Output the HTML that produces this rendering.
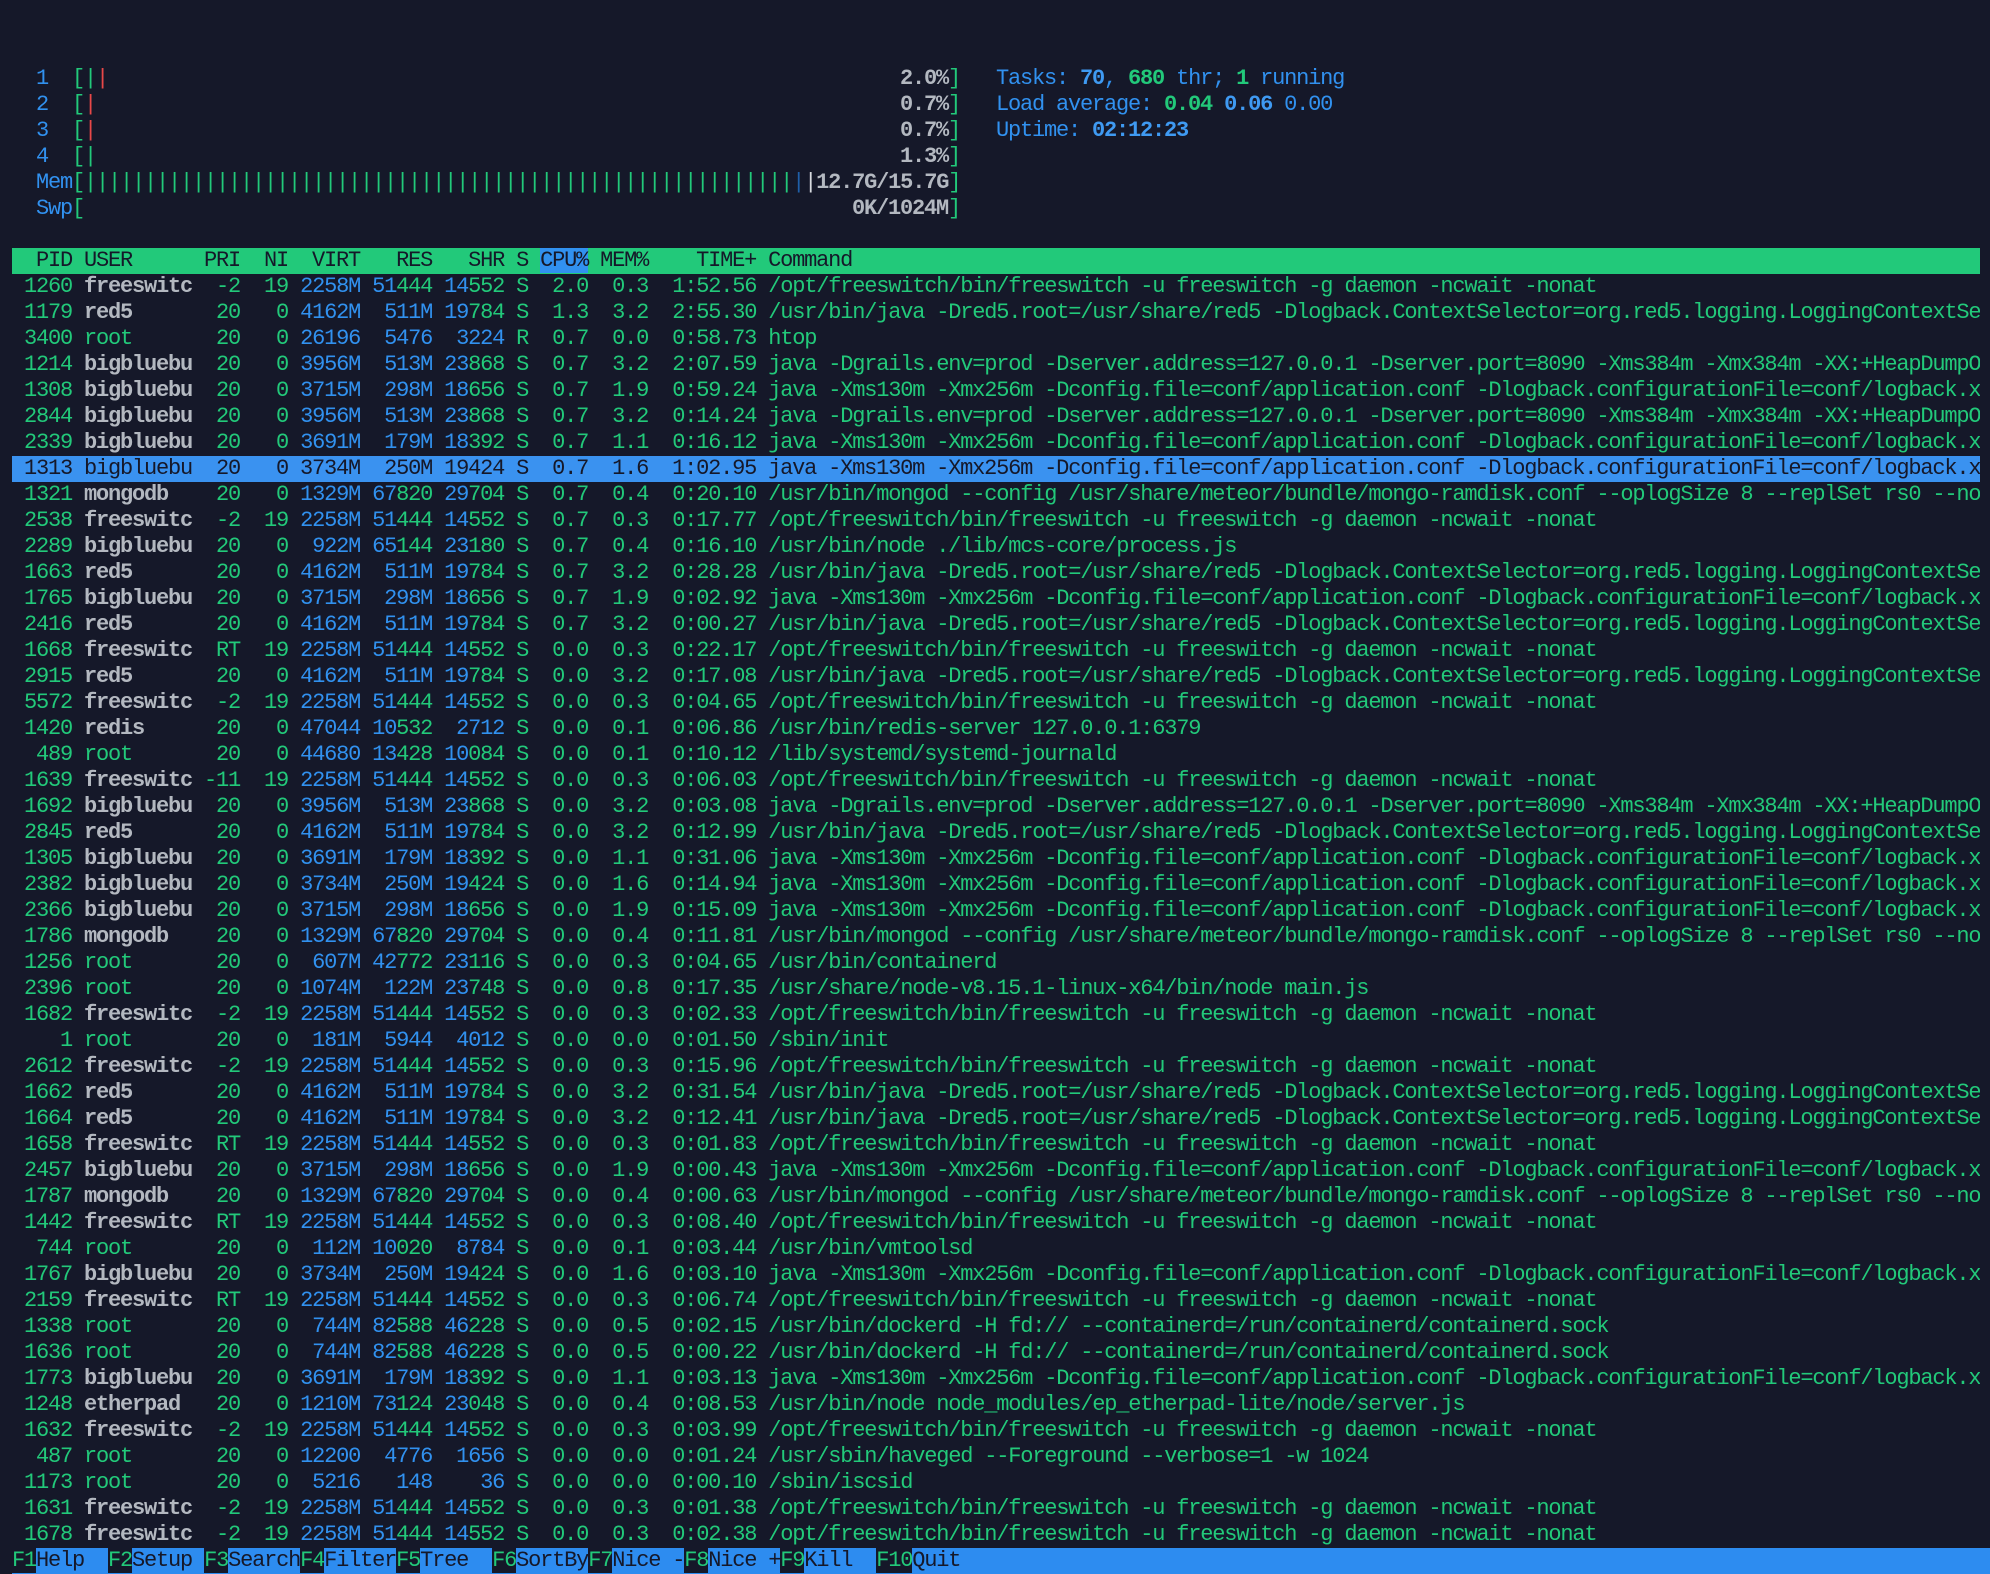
<!DOCTYPE html>
<html><head><meta charset="utf-8">
<style>
html,body{margin:0;padding:0;background:#151829;width:1990px;height:1566px;overflow:hidden}
#t{position:absolute;left:12px;top:66px;width:1978px;font-family:"Liberation Mono",monospace;font-size:22px;letter-spacing:-1.2px;color:#22c97a}
.l{height:26px;line-height:26px;white-space:pre;overflow:hidden;position:relative;width:1968px}
.a{position:absolute;top:0}
i{font-style:normal;color:#3191ef}
em{font-style:normal;font-weight:bold;color:#b3b8c0}
.w{font-weight:bold;color:#b3b8c0}
.r{color:#e84848}
.bb{font-weight:bold;color:#3f9af2}
.bg{font-weight:bold;color:#22c97a}
.wh{color:#d8dbe0}
.dk{color:#1f5fa8}
.hd{background:#22c97a;color:#151829}
.hd span{background:#3191ef}
.sel{background:#3a92f0;color:#151829}
.ft{background:#2d8cf0;color:#151829;width:1978px}
.ft b{font-weight:normal;color:#22c97a;background:#151829}
.val{position:absolute;top:0;left:0;width:948px;text-align:right}
</style></head><body>
<div id="t">
<div class="l"><span class="a" style="left:24px;color:#3191ef">1</span><span class="a" style="left:60px">[|<span class="r">|</span></span><span class="val"><span class="w">2.0%</span>]</span><span class="a" style="left:984px;color:#3191ef">Tasks: <span class="bb">70</span>, <span class="bg">680</span> thr; <span class="bg">1</span> running</span></div>
<div class="l"><span class="a" style="left:24px;color:#3191ef">2</span><span class="a" style="left:60px">[<span class="r">|</span></span><span class="val"><span class="w">0.7%</span>]</span><span class="a" style="left:984px;color:#3191ef">Load average: <span class="bg">0.04</span> <span class="bb">0.06</span> 0.00</span></div>
<div class="l"><span class="a" style="left:24px;color:#3191ef">3</span><span class="a" style="left:60px">[<span class="r">|</span></span><span class="val"><span class="w">0.7%</span>]</span><span class="a" style="left:984px;color:#3191ef">Uptime: <span class="bb">02:12:23</span></span></div>
<div class="l"><span class="a" style="left:24px;color:#3191ef">4</span><span class="a" style="left:60px">[|</span><span class="val"><span class="w">1.3%</span>]</span></div>
<div class="l"><span class="a" style="left:24px;color:#3191ef">Mem</span><span class="a" style="left:60px">[|||||||||||||||||||||||||||||||||||||||||||||||||||||||||||<span class="dk">|</span><span class="wh">|</span><span class="w">12.7G/15.7G</span>]</span></div>
<div class="l"><span class="a" style="left:24px;color:#3191ef">Swp</span><span class="a" style="left:60px">[</span><span class="val"><span class="w">0K/1024M</span>]</span></div>
<div class="l"> </div>
<div class="l hd">  PID USER      PRI  NI  VIRT   RES   SHR S <span>CPU%</span> MEM%    TIME+ Command</div>
<div class="l"> 1260 <em>freeswitc</em>  -2  19 <i>2258M</i> <i>51</i>444 <i>14</i>552 S  2.0  0.3  1:52.56 /opt/freeswitch/bin/freeswitch -u freeswitch -g daemon -ncwait -nonat</div>
<div class="l"> 1179 <em>red5     </em>  20   0 <i>4162M</i>  <i>511M</i> <i>19</i>784 S  1.3  3.2  2:55.30 /usr/bin/java -Dred5.root=/usr/share/red5 -Dlogback.ContextSelector=org.red5.logging.LoggingContextSelector</div>
<div class="l"> 3400 root       20   0 <i>26196</i>  <i>5476</i>  <i>3224</i> R  0.7  0.0  0:58.73 htop</div>
<div class="l"> 1214 <em>bigbluebu</em>  20   0 <i>3956M</i>  <i>513M</i> <i>23</i>868 S  0.7  3.2  2:07.59 java -Dgrails.env=prod -Dserver.address=127.0.0.1 -Dserver.port=8090 -Xms384m -Xmx384m -XX:+HeapDumpOnOutOfMemoryError</div>
<div class="l"> 1308 <em>bigbluebu</em>  20   0 <i>3715M</i>  <i>298M</i> <i>18</i>656 S  0.7  1.9  0:59.24 java -Xms130m -Xmx256m -Dconfig.file=conf/application.conf -Dlogback.configurationFile=conf/logback.xml</div>
<div class="l"> 2844 <em>bigbluebu</em>  20   0 <i>3956M</i>  <i>513M</i> <i>23</i>868 S  0.7  3.2  0:14.24 java -Dgrails.env=prod -Dserver.address=127.0.0.1 -Dserver.port=8090 -Xms384m -Xmx384m -XX:+HeapDumpOnOutOfMemoryError</div>
<div class="l"> 2339 <em>bigbluebu</em>  20   0 <i>3691M</i>  <i>179M</i> <i>18</i>392 S  0.7  1.1  0:16.12 java -Xms130m -Xmx256m -Dconfig.file=conf/application.conf -Dlogback.configurationFile=conf/logback.xml</div>
<div class="l sel"> 1313 bigbluebu  20   0 3734M  250M 19424 S  0.7  1.6  1:02.95 java -Xms130m -Xmx256m -Dconfig.file=conf/application.conf -Dlogback.configurationFile=conf/logback.xml</div>
<div class="l"> 1321 <em>mongodb  </em>  20   0 <i>1329M</i> <i>67</i>820 <i>29</i>704 S  0.7  0.4  0:20.10 /usr/bin/mongod --config /usr/share/meteor/bundle/mongo-ramdisk.conf --oplogSize 8 --replSet rs0 --noauth</div>
<div class="l"> 2538 <em>freeswitc</em>  -2  19 <i>2258M</i> <i>51</i>444 <i>14</i>552 S  0.7  0.3  0:17.77 /opt/freeswitch/bin/freeswitch -u freeswitch -g daemon -ncwait -nonat</div>
<div class="l"> 2289 <em>bigbluebu</em>  20   0  <i>922M</i> <i>65</i>144 <i>23</i>180 S  0.7  0.4  0:16.10 /usr/bin/node ./lib/mcs-core/process.js</div>
<div class="l"> 1663 <em>red5     </em>  20   0 <i>4162M</i>  <i>511M</i> <i>19</i>784 S  0.7  3.2  0:28.28 /usr/bin/java -Dred5.root=/usr/share/red5 -Dlogback.ContextSelector=org.red5.logging.LoggingContextSelector</div>
<div class="l"> 1765 <em>bigbluebu</em>  20   0 <i>3715M</i>  <i>298M</i> <i>18</i>656 S  0.7  1.9  0:02.92 java -Xms130m -Xmx256m -Dconfig.file=conf/application.conf -Dlogback.configurationFile=conf/logback.xml</div>
<div class="l"> 2416 <em>red5     </em>  20   0 <i>4162M</i>  <i>511M</i> <i>19</i>784 S  0.7  3.2  0:00.27 /usr/bin/java -Dred5.root=/usr/share/red5 -Dlogback.ContextSelector=org.red5.logging.LoggingContextSelector</div>
<div class="l"> 1668 <em>freeswitc</em>  RT  19 <i>2258M</i> <i>51</i>444 <i>14</i>552 S  0.0  0.3  0:22.17 /opt/freeswitch/bin/freeswitch -u freeswitch -g daemon -ncwait -nonat</div>
<div class="l"> 2915 <em>red5     </em>  20   0 <i>4162M</i>  <i>511M</i> <i>19</i>784 S  0.0  3.2  0:17.08 /usr/bin/java -Dred5.root=/usr/share/red5 -Dlogback.ContextSelector=org.red5.logging.LoggingContextSelector</div>
<div class="l"> 5572 <em>freeswitc</em>  -2  19 <i>2258M</i> <i>51</i>444 <i>14</i>552 S  0.0  0.3  0:04.65 /opt/freeswitch/bin/freeswitch -u freeswitch -g daemon -ncwait -nonat</div>
<div class="l"> 1420 <em>redis    </em>  20   0 <i>47044</i> <i>10</i>532  <i>2712</i> S  0.0  0.1  0:06.86 /usr/bin/redis-server 127.0.0.1:6379</div>
<div class="l">  489 root       20   0 <i>44680</i> <i>13</i>428 <i>10</i>084 S  0.0  0.1  0:10.12 /lib/systemd/systemd-journald</div>
<div class="l"> 1639 <em>freeswitc</em> -11  19 <i>2258M</i> <i>51</i>444 <i>14</i>552 S  0.0  0.3  0:06.03 /opt/freeswitch/bin/freeswitch -u freeswitch -g daemon -ncwait -nonat</div>
<div class="l"> 1692 <em>bigbluebu</em>  20   0 <i>3956M</i>  <i>513M</i> <i>23</i>868 S  0.0  3.2  0:03.08 java -Dgrails.env=prod -Dserver.address=127.0.0.1 -Dserver.port=8090 -Xms384m -Xmx384m -XX:+HeapDumpOnOutOfMemoryError</div>
<div class="l"> 2845 <em>red5     </em>  20   0 <i>4162M</i>  <i>511M</i> <i>19</i>784 S  0.0  3.2  0:12.99 /usr/bin/java -Dred5.root=/usr/share/red5 -Dlogback.ContextSelector=org.red5.logging.LoggingContextSelector</div>
<div class="l"> 1305 <em>bigbluebu</em>  20   0 <i>3691M</i>  <i>179M</i> <i>18</i>392 S  0.0  1.1  0:31.06 java -Xms130m -Xmx256m -Dconfig.file=conf/application.conf -Dlogback.configurationFile=conf/logback.xml</div>
<div class="l"> 2382 <em>bigbluebu</em>  20   0 <i>3734M</i>  <i>250M</i> <i>19</i>424 S  0.0  1.6  0:14.94 java -Xms130m -Xmx256m -Dconfig.file=conf/application.conf -Dlogback.configurationFile=conf/logback.xml</div>
<div class="l"> 2366 <em>bigbluebu</em>  20   0 <i>3715M</i>  <i>298M</i> <i>18</i>656 S  0.0  1.9  0:15.09 java -Xms130m -Xmx256m -Dconfig.file=conf/application.conf -Dlogback.configurationFile=conf/logback.xml</div>
<div class="l"> 1786 <em>mongodb  </em>  20   0 <i>1329M</i> <i>67</i>820 <i>29</i>704 S  0.0  0.4  0:11.81 /usr/bin/mongod --config /usr/share/meteor/bundle/mongo-ramdisk.conf --oplogSize 8 --replSet rs0 --noauth</div>
<div class="l"> 1256 root       20   0  <i>607M</i> <i>42</i>772 <i>23</i>116 S  0.0  0.3  0:04.65 /usr/bin/containerd</div>
<div class="l"> 2396 root       20   0 <i>1074M</i>  <i>122M</i> <i>23</i>748 S  0.0  0.8  0:17.35 /usr/share/node-v8.15.1-linux-x64/bin/node main.js</div>
<div class="l"> 1682 <em>freeswitc</em>  -2  19 <i>2258M</i> <i>51</i>444 <i>14</i>552 S  0.0  0.3  0:02.33 /opt/freeswitch/bin/freeswitch -u freeswitch -g daemon -ncwait -nonat</div>
<div class="l">    1 root       20   0  <i>181M</i>  <i>5944</i>  <i>4012</i> S  0.0  0.0  0:01.50 /sbin/init</div>
<div class="l"> 2612 <em>freeswitc</em>  -2  19 <i>2258M</i> <i>51</i>444 <i>14</i>552 S  0.0  0.3  0:15.96 /opt/freeswitch/bin/freeswitch -u freeswitch -g daemon -ncwait -nonat</div>
<div class="l"> 1662 <em>red5     </em>  20   0 <i>4162M</i>  <i>511M</i> <i>19</i>784 S  0.0  3.2  0:31.54 /usr/bin/java -Dred5.root=/usr/share/red5 -Dlogback.ContextSelector=org.red5.logging.LoggingContextSelector</div>
<div class="l"> 1664 <em>red5     </em>  20   0 <i>4162M</i>  <i>511M</i> <i>19</i>784 S  0.0  3.2  0:12.41 /usr/bin/java -Dred5.root=/usr/share/red5 -Dlogback.ContextSelector=org.red5.logging.LoggingContextSelector</div>
<div class="l"> 1658 <em>freeswitc</em>  RT  19 <i>2258M</i> <i>51</i>444 <i>14</i>552 S  0.0  0.3  0:01.83 /opt/freeswitch/bin/freeswitch -u freeswitch -g daemon -ncwait -nonat</div>
<div class="l"> 2457 <em>bigbluebu</em>  20   0 <i>3715M</i>  <i>298M</i> <i>18</i>656 S  0.0  1.9  0:00.43 java -Xms130m -Xmx256m -Dconfig.file=conf/application.conf -Dlogback.configurationFile=conf/logback.xml</div>
<div class="l"> 1787 <em>mongodb  </em>  20   0 <i>1329M</i> <i>67</i>820 <i>29</i>704 S  0.0  0.4  0:00.63 /usr/bin/mongod --config /usr/share/meteor/bundle/mongo-ramdisk.conf --oplogSize 8 --replSet rs0 --noauth</div>
<div class="l"> 1442 <em>freeswitc</em>  RT  19 <i>2258M</i> <i>51</i>444 <i>14</i>552 S  0.0  0.3  0:08.40 /opt/freeswitch/bin/freeswitch -u freeswitch -g daemon -ncwait -nonat</div>
<div class="l">  744 root       20   0  <i>112M</i> <i>10</i>020  <i>8784</i> S  0.0  0.1  0:03.44 /usr/bin/vmtoolsd</div>
<div class="l"> 1767 <em>bigbluebu</em>  20   0 <i>3734M</i>  <i>250M</i> <i>19</i>424 S  0.0  1.6  0:03.10 java -Xms130m -Xmx256m -Dconfig.file=conf/application.conf -Dlogback.configurationFile=conf/logback.xml</div>
<div class="l"> 2159 <em>freeswitc</em>  RT  19 <i>2258M</i> <i>51</i>444 <i>14</i>552 S  0.0  0.3  0:06.74 /opt/freeswitch/bin/freeswitch -u freeswitch -g daemon -ncwait -nonat</div>
<div class="l"> 1338 root       20   0  <i>744M</i> <i>82</i>588 <i>46</i>228 S  0.0  0.5  0:02.15 /usr/bin/dockerd -H fd:// --containerd=/run/containerd/containerd.sock</div>
<div class="l"> 1636 root       20   0  <i>744M</i> <i>82</i>588 <i>46</i>228 S  0.0  0.5  0:00.22 /usr/bin/dockerd -H fd:// --containerd=/run/containerd/containerd.sock</div>
<div class="l"> 1773 <em>bigbluebu</em>  20   0 <i>3691M</i>  <i>179M</i> <i>18</i>392 S  0.0  1.1  0:03.13 java -Xms130m -Xmx256m -Dconfig.file=conf/application.conf -Dlogback.configurationFile=conf/logback.xml</div>
<div class="l"> 1248 <em>etherpad </em>  20   0 <i>1210M</i> <i>73</i>124 <i>23</i>048 S  0.0  0.4  0:08.53 /usr/bin/node node_modules/ep_etherpad-lite/node/server.js</div>
<div class="l"> 1632 <em>freeswitc</em>  -2  19 <i>2258M</i> <i>51</i>444 <i>14</i>552 S  0.0  0.3  0:03.99 /opt/freeswitch/bin/freeswitch -u freeswitch -g daemon -ncwait -nonat</div>
<div class="l">  487 root       20   0 <i>12200</i>  <i>4776</i>  <i>1656</i> S  0.0  0.0  0:01.24 /usr/sbin/haveged --Foreground --verbose=1 -w 1024</div>
<div class="l"> 1173 root       20   0  <i>5216</i>   <i>148</i>    <i>36</i> S  0.0  0.0  0:00.10 /sbin/iscsid</div>
<div class="l"> 1631 <em>freeswitc</em>  -2  19 <i>2258M</i> <i>51</i>444 <i>14</i>552 S  0.0  0.3  0:01.38 /opt/freeswitch/bin/freeswitch -u freeswitch -g daemon -ncwait -nonat</div>
<div class="l"> 1678 <em>freeswitc</em>  -2  19 <i>2258M</i> <i>51</i>444 <i>14</i>552 S  0.0  0.3  0:02.38 /opt/freeswitch/bin/freeswitch -u freeswitch -g daemon -ncwait -nonat</div>
<div class="l ft"><b>F1</b>Help  <b>F2</b>Setup <b>F3</b>Search<b>F4</b>Filter<b>F5</b>Tree  <b>F6</b>SortBy<b>F7</b>Nice -<b>F8</b>Nice +<b>F9</b>Kill  <b>F10</b>Quit                                                                                                          </div>
</div>
</body></html>
